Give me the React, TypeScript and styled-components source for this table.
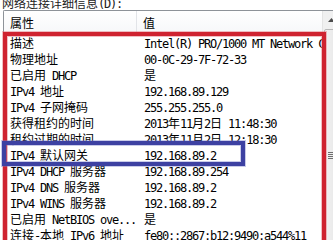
import React from 'react';
import styled, { createGlobalStyle } from 'styled-components';

interface DetailRow {
  name: string;
  value: string;
}

const rows: DetailRow[] = [
  { name: '描述', value: 'Intel(R) PRO/1000 MT Network Connection' },
  { name: '物理地址', value: '00-0C-29-7F-72-33' },
  { name: '已启用 DHCP', value: '是' },
  { name: 'IPv4 地址', value: '192.168.89.129' },
  { name: 'IPv4 子网掩码', value: '255.255.255.0' },
  { name: '获得租约的时间', value: '2013年11月2日 11:48:30' },
  { name: '租约过期的时间', value: '2013年11月2日 12:18:30' },
  { name: 'IPv4 默认网关', value: '192.168.89.2' },
  { name: 'IPv4 DHCP 服务器', value: '192.168.89.254' },
  { name: 'IPv4 DNS 服务器', value: '192.168.89.2' },
  { name: 'IPv4 WINS 服务器', value: '192.168.89.2' },
  { name: '已启用 NetBIOS ove...', value: '是' },
  { name: '连接-本地 IPv6 地址', value: 'fe80::2867:b12:9490:a544%11' },
];

const GlobalStyle = createGlobalStyle`
  html, body {
    margin: 0;
    padding: 0;
    background: #ffffff;
  }
  body {
    width: 333px;
    height: 240px;
    overflow: hidden;
    font-family: "Noto Sans CJK SC", sans-serif;
    font-size: 12px;
    color: #000;
  }
`;

const Dialog = styled.div`
  position: relative;
  width: 333px;
  height: 240px;
  overflow: hidden;
`;

const Caption = styled.div`
  margin: -5px 0 0 2px;
  height: 15px;
  line-height: 15px;
  color: #222;
  white-space: nowrap;
`;

const ListBox = styled.div`
  display: flex;
  margin-left: 3px;
  width: 340px;
  height: 400px;
  border-top: 1px solid #8e9399;
  border-left: 1px solid #8e9399;
  border-top-left-radius: 2px;
  background: #fff;
`;

const Table = styled.div`
  width: 318px;
  display: flex;
  flex-direction: column;
`;

const Header = styled.div`
  display: grid;
  grid-template-columns: 133px 1fr;
  height: 23px;
  background: linear-gradient(#ffffff, #f6f7f9);
  border-bottom: 1px solid #e3e6ea;
`;

const HeaderCell = styled.div<{ $divider?: boolean }>`
  display: flex;
  align-items: center;
  padding-left: ${p => (p.$divider ? '6px' : '6px')};
  border-right: ${p => (p.$divider ? '1px solid #e2e4e8' : 'none')};
  white-space: nowrap;
`;

const Row = styled.div`
  display: grid;
  grid-template-columns: 133px 1fr;
  height: 16px;
  line-height: 16px;
`;

const Cell = styled.div<{ $indent: number }>`
  padding-left: ${p => p.$indent}px;
  white-space: nowrap;
  overflow: hidden;
`;

const Latin = styled.span`
  font-family: "DejaVu Sans Mono", "Liberation Mono", monospace;
  font-size: 12px;
  letter-spacing: -1.22px;
`;

const ScrollBar = styled.div`
  position: relative;
  width: 17px;
  background: #f0f0f0;
  border-left: 1px solid #e4e4e4;
`;

const ArrowButton = styled.div`
  height: 17px;
  display: flex;
  align-items: center;
  justify-content: center;
  padding-right: 1px;
`;

const Thumb = styled.div`
  margin: 1px 1px 0 1px;
  height: 260px;
  background: linear-gradient(90deg, #f2f2f2, #e6e6e6);
  border: 1px solid #b8b8b8;
  border-radius: 2px;
  display: flex;
  flex-direction: column;
  align-items: center;
  padding-top: 122px;
  box-sizing: border-box;
`;

const Grip = styled.div`
  width: 7px;
  height: 1px;
  margin-bottom: 1px;
  background: #6f6f6f;
`;

// annotation frames drawn over the list
const Frame = styled.div<{ $color: string; $halo: string }>`
  position: absolute;
  box-sizing: border-box;
  border: 4px solid ${p => p.$color};
  box-shadow: 0 0 0 1px ${p => p.$halo}, inset 0 0 0 1px ${p => p.$halo};
  pointer-events: none;
`;

const RedFrame = styled(Frame)`
  left: 3px;
  top: 32px;
  width: 323px;
  height: 240px;
`;

const BlueFrame = styled(Frame)`
  left: 2px;
  top: 141px;
  width: 243px;
  height: 25px;
`;

// CJK runs stay at the dialog font, ASCII runs use the narrow monospace
const Mixed: React.FC<{ text: string }> = ({ text }) => (
  <>
    {text.split(/([\x00-\x7F]+)/).map((part, i) =>
      i % 2 === 1 ? <Latin key={i}>{part}</Latin> : part ? <span key={i}>{part}</span> : null
    )}
  </>
);

export default function App() {
  return (
    <Dialog>
      <GlobalStyle />
      <Caption>
        <Mixed text="网络连接详细信息(D):" />
      </Caption>
      <ListBox>
        <Table>
          <Header>
            <HeaderCell $divider>属性</HeaderCell>
            <HeaderCell>值</HeaderCell>
          </Header>
          {rows.map(r => (
            <Row key={r.name}>
              <Cell $indent={6}>
                <Mixed text={r.name} />
              </Cell>
              <Cell $indent={7}>
                <Mixed text={r.value} />
              </Cell>
            </Row>
          ))}
        </Table>
        <ScrollBar>
          <ArrowButton>
            <svg width="7" height="4" viewBox="0 0 7 4">
              <path d="M0 4 L3.5 0 L7 4 Z" fill="#4d4d4d" />
            </svg>
          </ArrowButton>
          <Thumb>
            <Grip />
            <Grip />
            <Grip />
            <Grip />
          </Thumb>
        </ScrollBar>
      </ListBox>
      <RedFrame $color="#cf2330" $halo="rgba(226, 110, 120, 0.45)" />
      <BlueFrame $color="#3d41a2" $halo="rgba(120, 125, 200, 0.4)" />
    </Dialog>
  );
}
